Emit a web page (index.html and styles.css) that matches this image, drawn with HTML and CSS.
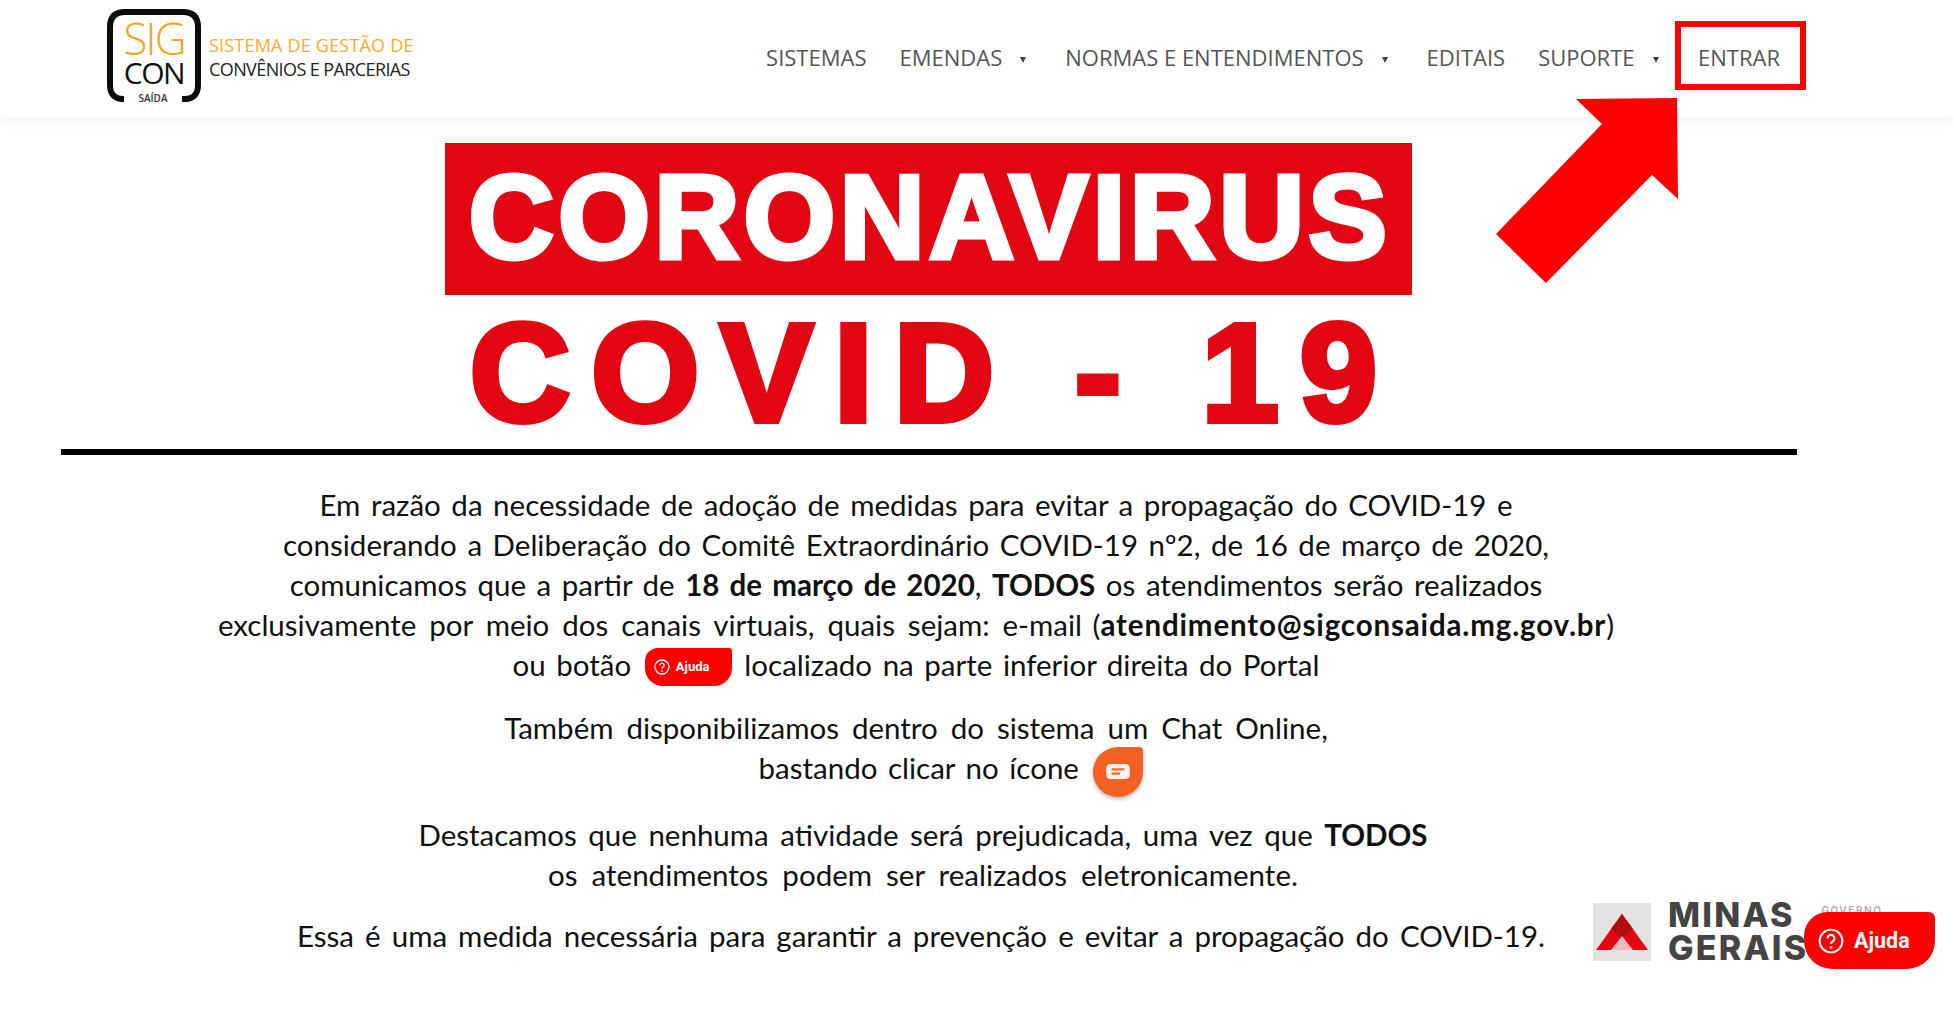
FILE: index.html
```html
<!DOCTYPE html>
<html lang="pt-BR">
<head>
  <meta charset="UTF-8">
  <title>SIGCON Saída</title>
  <link rel="stylesheet" href="styles.css">
</head>
<body>
  <header class="topbar">
    <a class="brand" href="#">
      <svg class="brand-mark" width="96" height="96" viewBox="0 0 96 96">
        <path d="M18 91 H17 C8 91 4 85 4 77 V19 C4 9 9 4 19 4 H77 C87 4 92 9 92 19 V77 C92 85 88 91 79 91 H76" fill="none" stroke="#0b0b0b" stroke-width="6"/>
        <text class="mark-sig" x="48" y="47" text-anchor="middle">SIG</text>
        <text class="mark-con" x="48" y="76" text-anchor="middle">CON</text>
        <text class="mark-saida" x="47" y="94" text-anchor="middle">SAÍDA</text>
      </svg>
      <span class="brand-name">
        <span class="brand-top">SISTEMA DE GESTÃO DE</span>
        <span class="brand-bottom">CONVÊNIOS E PARCERIAS</span>
      </span>
    </a>
    <nav class="menu">
      <a href="#">SISTEMAS</a>
      <a href="#" class="has-sub">EMENDAS</a>
      <a href="#" class="has-sub">NORMAS E ENTENDIMENTOS</a>
      <a href="#">EDITAIS</a>
      <a href="#" class="has-sub">SUPORTE</a>
      <a href="#" class="menu-enter">ENTRAR</a>
    </nav>
  </header>

  <svg class="arrow" width="186" height="188" viewBox="0 0 186 188">
    <path d="M82 3 L183 2 L184 103 L158 79 L52 187 L2 138 L108 28 Z" fill="#ff0000"/>
  </svg>

  <main class="notice">
    <h1 class="banner">CORONAVIRUS</h1>
    <h2 class="covid">COVID - 19</h2>
    <hr class="rule">

    <div class="copy">
      <p>Em razão da necessidade de adoção de medidas para evitar a propagação do COVID-19 e<br>
      considerando a Deliberação do Comitê Extraordinário COVID-19 nº2, de 16 de março de 2020,<br>
      comunicamos que a partir de <b>18 de março de 2020</b>, <b>TODOS</b> os atendimentos serão realizados<br>
      <span class="wide">exclusivamente por meio dos canais virtuais, quais sejam: e-mail</span> (<b class="email">atendimento@sigconsaida.mg.gov.br</b>)<br>
      ou botão <span class="mini-help"><svg width="16" height="16" viewBox="0 0 24 24"><circle cx="12" cy="12" r="10.5" fill="none" stroke="#fff" stroke-width="2"/><path d="M8.8 9.5a3.2 3.2 0 1 1 4.8 2.8c-1 .6-1.6 1.2-1.6 2.4" fill="none" stroke="#fff" stroke-width="2"/><circle cx="12" cy="18" r="1.3" fill="#fff"/></svg>Ajuda</span> localizado na parte inferior direita do Portal</p>

      <p class="gap-chat"><span class="wide">Também disponibilizamos dentro do sistema um Chat Online,</span><br>
      <span class="chat-line">bastando clicar no ícone <span class="mini-chat"><svg width="24" height="15" viewBox="0 0 22 14"><rect width="22" height="14" rx="4" fill="#fff" opacity=".92"/><rect x="5" y="4" width="12" height="2" fill="#f26122"/><rect x="5" y="8" width="8" height="2" fill="#f26122"/></svg></span></span></p>

      <p class="gap-todos">Destacamos que nenhuma atividade será prejudicada, uma vez que <b>TODOS</b><br>
      <span class="wide">os atendimentos podem ser realizados eletronicamente.</span></p>
    </div>

    <div class="closing">
      <p>Essa é uma medida necessária para garantir a prevenção e evitar a propagação do COVID-19.</p>
      <div class="gov-logo">
        <span class="gov-mark">
          <svg width="52" height="36" viewBox="0 0 52 36">
            <path d="M26 0 L52 36 H0 Z" fill="#e30613"/>
            <path d="M26 0 L37 15 L26 24 L15 15 Z" fill="#b10c12"/>
            <path d="M26 22 L37 36 H15 Z" fill="#efb9bd"/>
          </svg>
        </span>
        <span class="gov-name">MINAS<br>GERAIS</span>
        <span class="gov-tag">GOVERNO</span>
      </div>
    </div>
  </main>

  <a class="help-btn" href="#">
    <svg width="26" height="26" viewBox="0 0 24 24"><circle cx="12" cy="12" r="10.5" fill="none" stroke="#fff" stroke-width="1.8"/><path d="M8.8 9.5a3.2 3.2 0 1 1 4.8 2.8c-1 .6-1.6 1.2-1.6 2.4" fill="none" stroke="#fff" stroke-width="2"/><circle cx="12" cy="18" r="1.3" fill="#fff"/></svg>
    Ajuda
  </a>
</body>
</html>
```

FILE: styles.css
```css
body {
  margin: 0;
  background: #fff;
  color: #111;
  font-family: "Lato", sans-serif;
  overflow: hidden;
}

/* topo */
.topbar {
  height: 117px;
  box-sizing: border-box;
  display: flex;
  align-items: center;
  padding: 0 154px 0 106px;
  background: #fff;
  box-shadow: 0 2px 14px rgba(0, 0, 0, 0.07);
}

.brand {
  display: flex;
  align-items: center;
  gap: 7px;
  text-decoration: none;
}

.brand-mark {
  display: block;
  margin-bottom: 6px;
}

.mark-sig {
  font-family: "Open Sans", sans-serif;
  font-size: 44px;
  font-weight: 300;
  letter-spacing: -2px;
  fill: #f9a31a;
}

.mark-con {
  font-family: "Open Sans", sans-serif;
  font-size: 30px;
  letter-spacing: -1.5px;
  fill: #111;
}

.mark-saida {
  font-family: "Open Sans", sans-serif;
  font-size: 10px;
  font-weight: 600;
  fill: #333;
}

.brand-name {
  display: flex;
  flex-direction: column;
  gap: 2px;
  margin-bottom: 3px;
  font-family: "Open Sans", sans-serif;
  font-size: 18px;
  line-height: 22px;
  letter-spacing: -0.6px;
  white-space: nowrap;
}

.brand-top {
  color: #fbab2c;
  letter-spacing: 0.2px;
}

.brand-bottom {
  color: #222;
}

.menu {
  display: flex;
  align-items: baseline;
  margin-left: auto;
  margin-bottom: 7px;
}

.menu a {
  padding: 0 16.5px;
  color: #555;
  font-family: "Open Sans", sans-serif;
  font-size: 22px;
  line-height: 30px;
  text-decoration: none;
  white-space: nowrap;
}

.menu .has-sub::after {
  content: "";
  display: inline-block;
  margin: 0 6px 3px 18px;
  border-top: 6px solid #444;
  border-left: 3.5px solid transparent;
  border-right: 3.5px solid transparent;
}

.menu .menu-enter {
  padding: 15.5px 20px 11.5px 17px;
  outline: 6px solid #ff0000;
}

.arrow {
  position: absolute;
  left: 1494px;
  top: 96px;
  z-index: 2;
}

/* aviso */
.notice {
  display: flex;
  flex-direction: column;
  padding: 26px 157px 0 61px;
}

.banner {
  align-self: center;
  width: 967px;
  height: 152px;
  box-sizing: border-box;
  margin: 0 2px 0 0;
  padding-left: 4px;
  background: #e20613;
  color: #fff;
  font-family: "Liberation Sans", sans-serif;
  font-size: 118px;
  font-weight: 700;
  line-height: 148px;
  letter-spacing: 4.2px;
  text-align: center;
  -webkit-text-stroke: 5px #fff;
}

.covid {
  margin: 10px 0 0;
  padding-left: 10px;
  color: #e20613;
  font-family: "Liberation Sans", sans-serif;
  font-size: 139px;
  font-weight: 700;
  line-height: 136px;
  letter-spacing: 21px;
  text-align: center;
  -webkit-text-stroke: 6px #e20613;
}

.rule {
  height: 6px;
  margin: 8px 0 0;
  border: 0;
  background: #000;
}

.copy {
  margin-top: 30px;
  padding-right: 26px;
  text-align: center;
}

.copy p,
.closing p {
  margin: 0;
  font-size: 29.5px;
  line-height: 40px;
  word-spacing: 3px;
  white-space: nowrap;
}

.closing p {
  word-spacing: 3.5px;
}

.copy .wide {
  word-spacing: 5.4px;
}

.copy .email {
  letter-spacing: 0.85px;
}

.copy .gap-chat {
  margin-top: 23px;
}

.copy .gap-todos {
  margin-top: 27px;
  padding-left: 14px;
  word-spacing: 4px;
}

.copy .gap-todos .wide {
  word-spacing: 6.5px;
}

.chat-line {
  padding-left: 70px;
}

.mini-help {
  display: inline-flex;
  align-items: center;
  gap: 6px;
  height: 38px;
  width: 87px;
  box-sizing: border-box;
  padding-left: 9px;
  margin: -8px 2px -4px 3px;
  vertical-align: middle;
  background: #ff0000;
  border-radius: 13px 3px 18px 18px;
  color: #fff;
  font-family: "Roboto", sans-serif;
  font-size: 13px;
  font-weight: 700;
}

.mini-chat {
  display: inline-flex;
  align-items: center;
  justify-content: center;
  width: 50px;
  height: 50px;
  margin: -10px 0 -10px 4px;
  vertical-align: middle;
  background: #f26122;
  border-radius: 25px 4px 25px 25px;
  box-shadow: 0 2px 4px rgba(0, 0, 0, 0.3);
}

.closing {
  display: flex;
  align-items: center;
  margin-top: 8px;
  padding-left: 236px;
}

.gov-logo {
  display: flex;
  align-items: flex-start;
  margin: 0 0 4px 48px;
}

.gov-mark {
  display: flex;
  align-items: flex-end;
  justify-content: center;
  width: 58px;
  height: 58px;
  box-sizing: border-box;
  padding-bottom: 11px;
  background: #e3e3e3;
}

.gov-name {
  margin-left: 17px;
  margin-top: -5px;
  color: #444;
  font-family: "Inter", sans-serif;
  font-size: 34px;
  font-weight: 800;
  line-height: 33px;
  letter-spacing: 2.2px;
}

.gov-tag {
  margin: 1px 0 0 13px;
  color: #aaa;
  font-family: "Inter", sans-serif;
  font-size: 10px;
  font-weight: 600;
  letter-spacing: 1.6px;
}

.help-btn {
  position: fixed;
  left: 1804px;
  top: 912px;
  z-index: 3;
  display: flex;
  align-items: center;
  gap: 10px;
  width: 131px;
  height: 57px;
  box-sizing: border-box;
  padding-left: 14px;
  background: #ff0000;
  border-radius: 24px 6px 28px 28px;
  color: #fff;
  font-family: "Roboto", sans-serif;
  font-size: 21.5px;
  font-weight: 700;
  text-decoration: none;
}
```
